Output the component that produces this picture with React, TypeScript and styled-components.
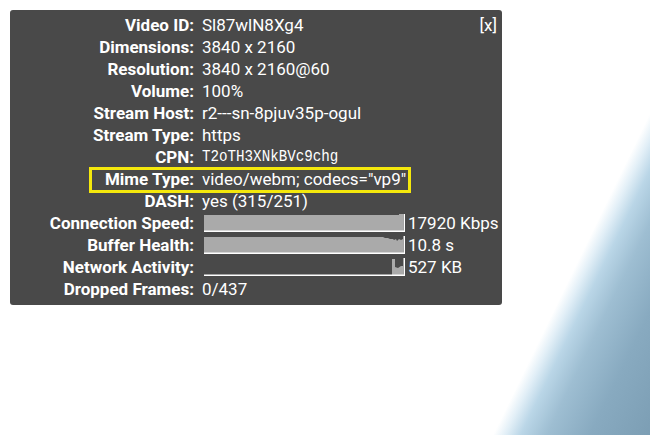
import React, { FunctionComponent } from 'react';
import styled, { createGlobalStyle } from 'styled-components';

const GlobalStyle = createGlobalStyle`
  html, body {
    margin: 0;
    padding: 0;
    background: #ffffff;
  }
`;

const Page = styled.div`
  width: 650px;
  height: 435px;
  box-sizing: border-box;
  padding: 10px;
  overflow: hidden;
  background: linear-gradient(
    116deg,
    #ffffff 0%,
    #ffffff 81.8%,
    #e2eff7 83.2%,
    #bad6e7 85%,
    #9ebed2 88%,
    #88aac0 93%,
    #7c9eb4 100%
  );
  font-family: Roboto, 'Liberation Sans', sans-serif;
`;

const Panel = styled.div`
  position: relative;
  width: 492px;
  box-sizing: border-box;
  padding: 4px 0 5px;
  border-radius: 3px;
  background: #494949;
  color: #ffffff;
  font-size: 17px;
  line-height: 22px;
`;

const Close = styled.div`
  position: absolute;
  top: 4px;
  right: 5px;
  font-size: 17px;
  line-height: 22px;
  cursor: pointer;
`;

const Row = styled.div<{ $highlight?: boolean }>`
  position: relative;
  display: flex;
  align-items: center;
  height: 22px;
  white-space: nowrap;

  ${({ $highlight }) =>
    $highlight &&
    `
    &::after {
      content: '';
      position: absolute;
      left: 79px;
      top: -1px;
      width: 322px;
      height: 26px;
      box-sizing: border-box;
      border: 3px solid #f4e80c;
      pointer-events: none;
    }
  `}
`;

const Label = styled.div`
  width: 184px;
  flex-shrink: 0;
  text-align: right;
  font-weight: 700;
`;

const Value = styled.div`
  margin-left: 8px;
  display: flex;
  align-items: center;
  gap: 3px;
`;

// half-width gothic look: tall, narrow, thin glyphs
const Mono = styled.span`
  display: inline-block;
  font-family: 'Liberation Mono', monospace;
  font-size: 17px;
  transform: scaleX(0.835);
  transform-origin: left center;
`;

const BarSvg = styled.svg`
  display: block;
  flex-shrink: 0;
  margin-left: 2px;
`;

type BarKind = 'speed' | 'buffer' | 'network';

const fills: Record<BarKind, string> = {
  speed: '0,1 195,1 195,0 199,0 199,17 0,17',
  buffer:
    '0,1 179,1 181,2 184,2 186,3 189,3 190,4 192,3 193,5 195,3 197,4 199,3 199,17 0,17',
  network: '188,17 188,1 191,1 191,9 194,10 197,8 199,8 199,17',
};

const Bar: FunctionComponent<{ kind: BarKind }> = ({ kind }) => (
  <BarSvg width={201} height={18} viewBox="0 0 201 18">
    <polygon points={fills[kind]} fill="#aaaaaa" />
    <rect x={0} y={16.5} width={201} height={1.5} fill="#ffffff" />
    <rect x={199.5} y={0} width={1.5} height={18} fill="#ffffff" />
  </BarSvg>
);

const plain: [string, string][] = [
  ['Video ID:', 'Sl87wlN8Xg4'],
  ['Dimensions:', '3840 x 2160'],
  ['Resolution:', '3840 x 2160@60'],
  ['Volume:', '100%'],
  ['Stream Host:', 'r2---sn-8pjuv35p-ogul'],
  ['Stream Type:', 'https'],
];

const graphs: [string, BarKind, string][] = [
  ['Connection Speed:', 'speed', '17920 Kbps'],
  ['Buffer Health:', 'buffer', '10.8 s'],
  ['Network Activity:', 'network', '527 KB'],
];

const App: FunctionComponent = () => (
  <>
    <GlobalStyle />
    <Page>
      <Panel>
        <Close>[x]</Close>
        {plain.map(([label, value]) => (
          <Row key={label}>
            <Label>{label}</Label>
            <Value>{value}</Value>
          </Row>
        ))}
        <Row>
          <Label>CPN:</Label>
          <Value>
            <Mono>T2oTH3XNkBVc9chg</Mono>
          </Value>
        </Row>
        <Row $highlight>
          <Label>Mime Type:</Label>
          <Value>video/webm; codecs="vp9"</Value>
        </Row>
        <Row>
          <Label>DASH:</Label>
          <Value>yes (315/251)</Value>
        </Row>
        {graphs.map(([label, kind, value]) => (
          <Row key={label}>
            <Label>{label}</Label>
            <Value>
              <Bar kind={kind} />
              {value}
            </Value>
          </Row>
        ))}
        <Row>
          <Label>Dropped Frames:</Label>
          <Value>0/437</Value>
        </Row>
      </Panel>
    </Page>
  </>
);

export default App;
